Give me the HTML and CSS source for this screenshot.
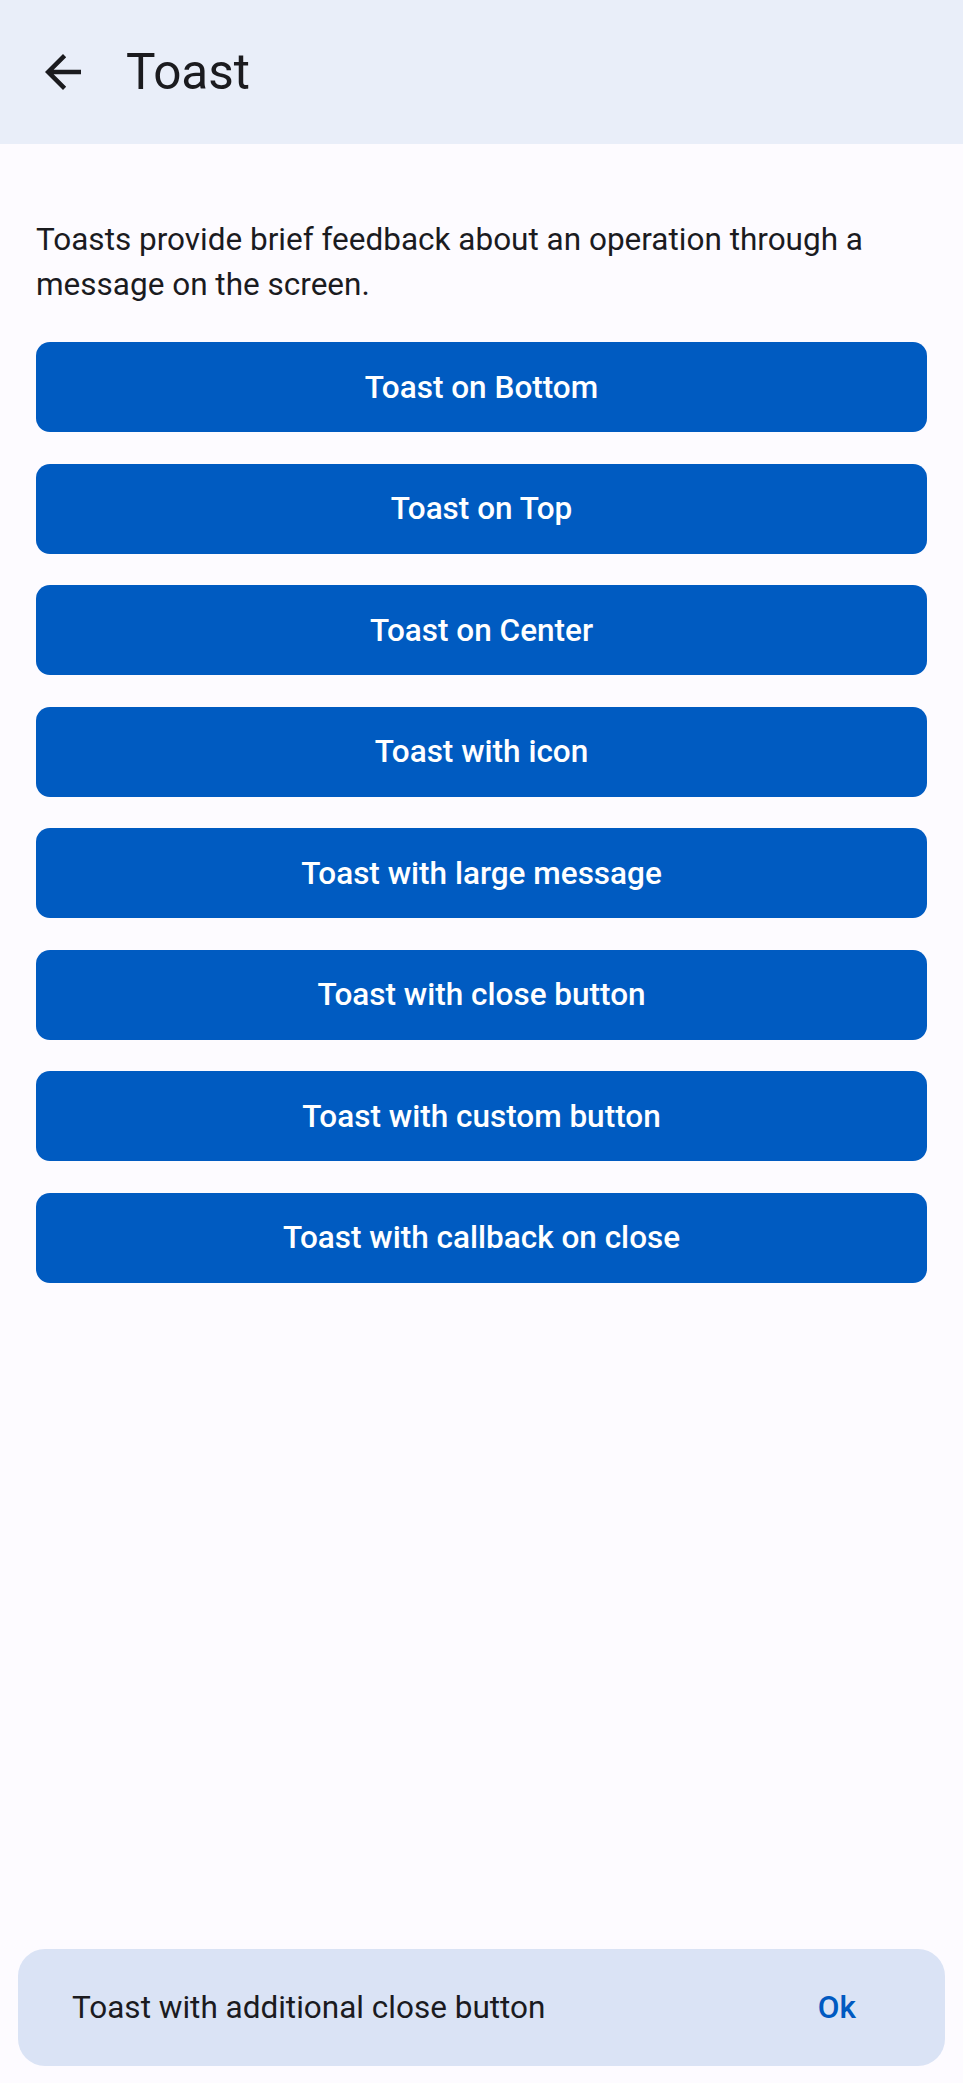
FILE: index.html
```html
<!DOCTYPE html>
<html lang="en">
<head>
<meta charset="utf-8">
<title>Toast</title>
<link rel="stylesheet" href="styles.css">
</head>
<body>
<div class="screen">
  <header class="topbar">
    <button class="back" aria-label="Back">
      <svg viewBox="0 0 24 24" width="54" height="54"><path d="M20 11H7.83l5.59-5.59L12 4l-8 8 8 8 1.41-1.41L7.83 13H20v-2z" fill="#1b1b1f"/></svg>
    </button>
    <h1 class="title">Toast</h1>
  </header>
  <main class="content">
    <p class="intro">Toasts provide brief feedback about an operation through a message on the screen.</p>
    <div class="actions">
      <button class="btn">Toast on Bottom</button>
      <button class="btn">Toast on Top</button>
      <button class="btn">Toast on Center</button>
      <button class="btn">Toast with icon</button>
      <button class="btn">Toast with large message</button>
      <button class="btn">Toast with close button</button>
      <button class="btn">Toast with custom button</button>
      <button class="btn">Toast with callback on close</button>
    </div>
  </main>
  <div class="toast">
    <span class="toast-msg">Toast with additional close button</span>
    <button class="toast-action">Ok</button>
  </div>
</div>
</body>
</html>
```
FILE: styles.css
```css
* { box-sizing: border-box; }
html, body {
  margin: 0;
  padding: 0;
  background: #fdfbff;
  font-family: Roboto, "Noto Sans", "Liberation Sans", sans-serif;
  color: #1b1b1f;
}
.screen {
  min-height: 2083px;
  display: flex;
  flex-direction: column;
}
.topbar {
  height: 144px;
  background: #e9eef9;
  display: flex;
  align-items: center;
  padding-left: 36px;
}
.back {
  width: 54px;
  height: 54px;
  padding: 0;
  border: 0;
  background: none;
  display: flex;
}
.title {
  margin: 0 0 0 36px;
  font-size: 49.5px;
  font-weight: 400;
  line-height: normal;
  color: #1b1b1f;
}
.content {
  padding: 73px 36px 0;
}
.intro {
  margin: 0;
  font-size: 31.5px;
  line-height: 45px;
  letter-spacing: 0;
}
.actions {
  margin-top: 35px;
  display: flex;
  flex-direction: column;
  gap: 31.5px;
}
.btn {
  height: 90px;
  border: 0;
  border-radius: 14px;
  background: #005bc1;
  color: #ffffff;
  font-family: Roboto, "Noto Sans", "Liberation Sans", sans-serif;
  font-size: 31.5px;
  font-weight: 500;
  letter-spacing: 0;
  padding: 0;
}
.toast {
  margin: auto 18px 17px;
  height: 117px;
  border-radius: 27px;
  background: #dae3f5;
  display: flex;
  align-items: center;
  justify-content: space-between;
  padding: 0 89px 0 54px;
}
.toast-msg {
  font-size: 31.5px;
  letter-spacing: 0;
  color: #1b1b1f;
}
.toast-action {
  border: 0;
  background: none;
  padding: 0;
  font-family: Roboto, "Noto Sans", "Liberation Sans", sans-serif;
  font-size: 31.5px;
  font-weight: 500;
  color: #005ac1;
  letter-spacing: 0;
}
```
